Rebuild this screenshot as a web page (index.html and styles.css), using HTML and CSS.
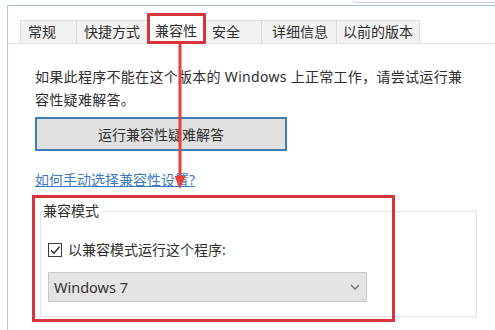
FILE: index.html
```html
<!DOCTYPE html>
<html lang="zh-CN">
<head>
<meta charset="utf-8">
<title>兼容性</title>
<link rel="stylesheet" href="styles.css">
</head>
<body>
<div class="chrome"><div class="chrome-box"></div></div>
<div class="window">
  <div class="tabs">
    <div class="tab tab-general">常规</div>
    <div class="tab tab-shortcut">快捷方式</div>
    <div class="tab tab-active">兼容性</div>
    <div class="tab tab-security">安全</div>
    <div class="tab tab-details">详细信息</div>
    <div class="tab tab-previous">以前的版本</div>
  </div>
  <div class="panel">
    <p class="intro">如果此程序不能在这个版本的 Windows 上正常工作，请尝试运行兼容性疑难解答。</p>
    <button class="btn" type="button">运行兼容性疑难解答</button>
    <a class="link" href="#">如何手动选择兼容性设置?</a>
    <div class="group">
      <span class="legend">兼容模式</span>
      <label class="check-row">
        <svg class="check" width="15" height="15" viewBox="0 0 15 15"><rect x="0.5" y="0.5" width="13" height="13" fill="#fff" stroke="#3a3a3a"/><path d="M3 7.2 L6 10.2 L11.5 3.8" fill="none" stroke="#2a2a2a" stroke-width="1.4"/></svg>
        <span>以兼容模式运行这个程序:</span>
      </label>
      <div class="select">
        <span>Windows 7</span>
        <svg width="10" height="6" viewBox="0 0 10 6"><path d="M1 1 L5 5 L9 1" fill="none" stroke="#6d6d6d" stroke-width="1.3"/></svg>
      </div>
      <div class="highlight"></div>
    </div>
  </div>
</div>
<svg class="arrow" width="14" height="146" viewBox="0 0 14 146"><line x1="7" y1="0" x2="7" y2="134" stroke="#e5403e" stroke-width="3"/><polygon points="1.5,132 12.5,132 7,145" fill="#e5403e"/></svg>
</body>
</html>
```
FILE: styles.css
```css
html, body {
  margin: 0;
  padding: 0;
}
body {
  width: 495px;
  height: 330px;
  overflow: hidden;
  position: relative;
  background: #fff;
  font-family: "Noto Sans", "Noto Sans CJK SC", sans-serif;
  font-size: 14px;
  color: #2e2e2e;
}
.chrome {
  height: 5px;
  display: flex;
}
.chrome-box {
  margin-left: 353px;
  flex: 1;
  height: 2px;
  border-left: 1px solid #d8d8d8;
  border-bottom: 1px solid #d2d2d2;
}
.window {
  margin-left: 7px;
  height: 325px;
  border-left: 1px solid #b7cadd;
  border-top: 1px solid #a9c0da;
  box-sizing: border-box;
}
.tabs {
  display: flex;
  align-items: flex-end;
  padding-top: 7px;
  padding-left: 12px;
  border-bottom: 1px solid #e2e2e2;
  height: 38px;
  box-sizing: border-box;
}
.tab {
  height: 23px;
  box-sizing: border-box;
  border: 1px solid #dcdcdc;
  border-bottom: 0;
  background: #f2f2f2;
  margin-left: -1px;
  line-height: 20px;
  padding-top: 1px;
  white-space: nowrap;
}
.tab-general { width: 57px; padding-left: 7px; margin-left: 0; }
.tab-shortcut { width: 72px; padding-left: 7px; }
.tab-security { width: 57px; padding-left: 6px; }
.tab-details { width: 76px; padding-left: 10px; }
.tab-previous { width: 84px; padding-left: 6px; }
.tab-active {
  width: 59px;
  height: 31px;
  margin-bottom: -1px;
  border: 3px solid #d8353a;
  background: #fff;
  padding-left: 5px;
  padding-top: 5px;
  position: relative;
  z-index: 1;
}
.panel {
  padding: 21px 0 0 27px;
}
.intro {
  margin: 0;
  width: 440px;
  line-height: 23px;
  letter-spacing: 0.3px;
}
.btn {
  display: flex;
  align-items: center;
  justify-content: center;
  margin-top: 6px;
  width: 252px;
  height: 34px;
  box-sizing: border-box;
  border: 2px solid #3f7db3;
  background: #e1e1e1;
  font: inherit;
  color: #2e2e2e;
  padding: 0;
}
.link {
  display: block;
  width: max-content;
  margin-top: 19px;
  line-height: 20px;
  color: #3d79bd;
  text-decoration: underline;
}
.group {
  position: relative;
  margin-top: 21px;
  margin-left: 5px;
  width: 437px;
  height: 106px;
  box-sizing: border-box;
  border: 1px solid #e3e3e3;
  padding-left: 7px;
}
.legend {
  display: inline-block;
  margin-top: -12px;
  margin-left: -5px;
  padding: 0 2px 0 0;
  line-height: 22px;
  background: #fff;
  vertical-align: top;
}
.check-row {
  display: flex;
  align-items: center;
  gap: 5px;
  margin-top: 9px;
  line-height: 20px;
}
.check {
  display: block;
}
.select {
  margin-top: 12px;
  width: 319px;
  height: 30px;
  box-sizing: border-box;
  border: 1px solid #c9c9c9;
  background: #e4e4e4;
  display: flex;
  align-items: center;
  justify-content: space-between;
  padding: 0 6px 0 5px;
  font-size: 14.5px;
  color: #333;
}
.highlight {
  position: absolute;
  left: -9px;
  top: -17px;
  width: 363px;
  height: 127px;
  box-sizing: border-box;
  border: 3px solid #d8353a;
  pointer-events: none;
}
.arrow {
  position: absolute;
  left: 173px;
  top: 44px;
}
```
